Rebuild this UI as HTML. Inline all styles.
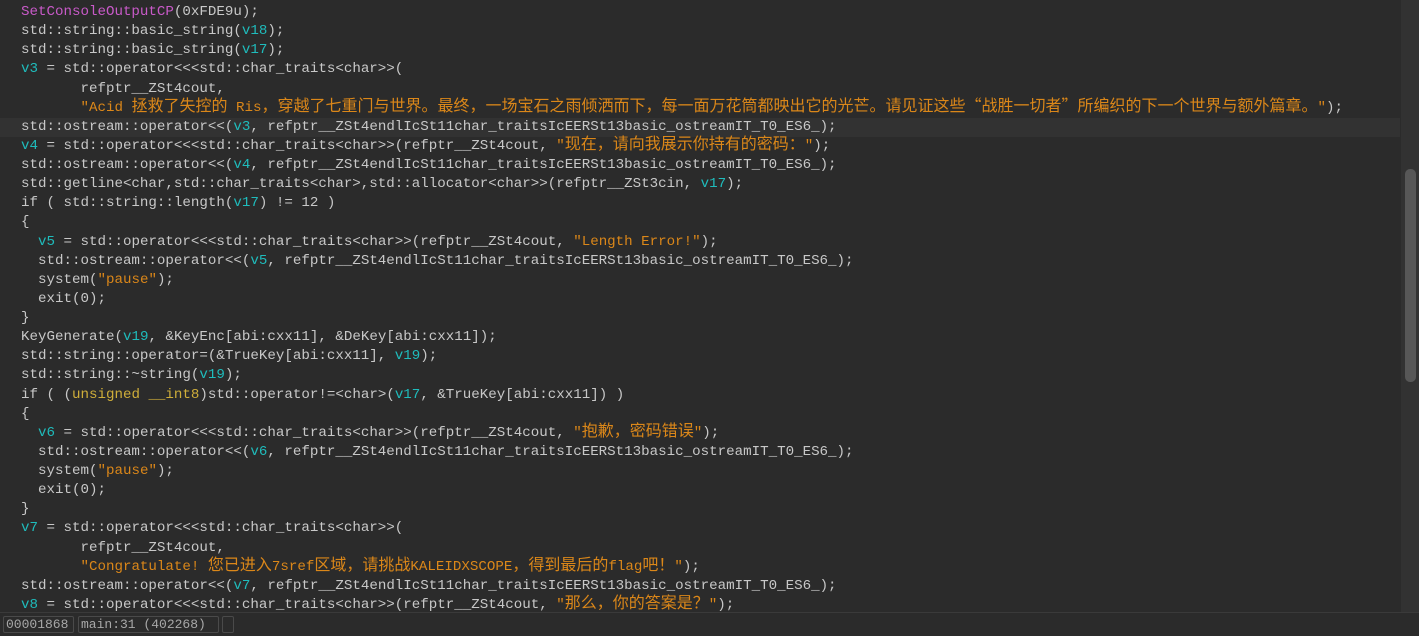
<!DOCTYPE html>
<html><head><meta charset="utf-8"><style>
html,body{margin:0;padding:0;width:1419px;height:635px;overflow:hidden;background:#2b2b2b}
#code{position:absolute;left:0;top:3px;width:1400px;height:609px;overflow:hidden;font-family:"Liberation Mono","Noto Sans CJK SC",monospace;font-size:14.17px;line-height:19.13px;color:#c8c8c8}
.l{padding-left:21px;height:19.13px;white-space:pre}
.hl{background:#323232}
.t{color:#1fbcbc}.m{color:#c95ac9}.o{color:#db8719}.y{color:#cfae3a}
.c{font-family:"Noto Sans CJK SC",sans-serif;font-size:16px;line-height:10px}
#sb{position:absolute;left:1401px;top:0;width:18px;height:612px;background:#323232}
#th{position:absolute;left:1405px;top:169px;width:11px;height:213px;background:#575757;border-radius:5px}
#st{position:absolute;left:0;top:612px;width:1419px;height:23px;background:#2b2b2b;border-top:1px solid #3a3a3a}
.bx{position:absolute;top:3px;height:17px;border:1px solid #4a4a4a;border-radius:2px;font-family:"Liberation Mono",monospace;font-size:13px;line-height:15px;color:#a8a8a8;padding-left:2px;box-sizing:border-box}
</style></head><body>
<div id="code"><div class="l"><span class="m">SetConsoleOutputCP</span>(0xFDE9u);</div><div class="l">std::string::basic_string(<span class="t">v18</span>);</div><div class="l">std::string::basic_string(<span class="t">v17</span>);</div><div class="l"><span class="t">v3</span> = std::operator&lt;&lt;&lt;std::char_traits&lt;char&gt;&gt;(</div><div class="l">       refptr__ZSt4cout,</div><div class="l">       <span class="o">"Acid <span class="c">拯救了失控的</span> Ris<span class="c">，穿越了七重门与世界。最终，一场宝石之雨倾洒而下，每一面万花筒都映出它的光芒。请见证这些“战胜一切者”所编织的下一个世界与额外篇章。</span>"</span>);</div><div class="l hl">std::ostream::operator&lt;&lt;(<span class="t">v3</span>, refptr__ZSt4endlIcSt11char_traitsIcEERSt13basic_ostreamIT_T0_ES6_);</div><div class="l"><span class="t">v4</span> = std::operator&lt;&lt;&lt;std::char_traits&lt;char&gt;&gt;(refptr__ZSt4cout, <span class="o">"<span class="c">现在，请向我展示你持有的密码：</span>"</span>);</div><div class="l">std::ostream::operator&lt;&lt;(<span class="t">v4</span>, refptr__ZSt4endlIcSt11char_traitsIcEERSt13basic_ostreamIT_T0_ES6_);</div><div class="l">std::getline&lt;char,std::char_traits&lt;char&gt;,std::allocator&lt;char&gt;&gt;(refptr__ZSt3cin, <span class="t">v17</span>);</div><div class="l">if ( std::string::length(<span class="t">v17</span>) != 12 )</div><div class="l">{</div><div class="l">  <span class="t">v5</span> = std::operator&lt;&lt;&lt;std::char_traits&lt;char&gt;&gt;(refptr__ZSt4cout, <span class="o">"Length Error!"</span>);</div><div class="l">  std::ostream::operator&lt;&lt;(<span class="t">v5</span>, refptr__ZSt4endlIcSt11char_traitsIcEERSt13basic_ostreamIT_T0_ES6_);</div><div class="l">  system(<span class="o">"pause"</span>);</div><div class="l">  exit(0);</div><div class="l">}</div><div class="l">KeyGenerate(<span class="t">v19</span>, &amp;KeyEnc[abi:cxx11], &amp;DeKey[abi:cxx11]);</div><div class="l">std::string::operator=(&amp;TrueKey[abi:cxx11], <span class="t">v19</span>);</div><div class="l">std::string::~string(<span class="t">v19</span>);</div><div class="l">if ( (<span class="y">unsigned __int8</span>)std::operator!=&lt;char&gt;(<span class="t">v17</span>, &amp;TrueKey[abi:cxx11]) )</div><div class="l">{</div><div class="l">  <span class="t">v6</span> = std::operator&lt;&lt;&lt;std::char_traits&lt;char&gt;&gt;(refptr__ZSt4cout, <span class="o">"<span class="c">抱歉，密码错误</span>"</span>);</div><div class="l">  std::ostream::operator&lt;&lt;(<span class="t">v6</span>, refptr__ZSt4endlIcSt11char_traitsIcEERSt13basic_ostreamIT_T0_ES6_);</div><div class="l">  system(<span class="o">"pause"</span>);</div><div class="l">  exit(0);</div><div class="l">}</div><div class="l"><span class="t">v7</span> = std::operator&lt;&lt;&lt;std::char_traits&lt;char&gt;&gt;(</div><div class="l">       refptr__ZSt4cout,</div><div class="l">       <span class="o">"Congratulate! <span class="c">您已进入</span>7sref<span class="c">区域，请挑战</span>KALEIDXSCOPE<span class="c">，得到最后的</span>flag<span class="c">吧！</span>"</span>);</div><div class="l">std::ostream::operator&lt;&lt;(<span class="t">v7</span>, refptr__ZSt4endlIcSt11char_traitsIcEERSt13basic_ostreamIT_T0_ES6_);</div><div class="l"><span class="t">v8</span> = std::operator&lt;&lt;&lt;std::char_traits&lt;char&gt;&gt;(refptr__ZSt4cout, <span class="o">"<span class="c">那么，你的答案是？</span>"</span>);</div></div>
<div id="sb"></div><div id="th"></div>
<div id="st">
<div class="bx" style="left:3px;width:71px">00001868</div>
<div class="bx" style="left:78px;width:141px">main:31 (402268)</div>
<div class="bx" style="left:222px;width:12px"></div>
</div>
</body></html>
